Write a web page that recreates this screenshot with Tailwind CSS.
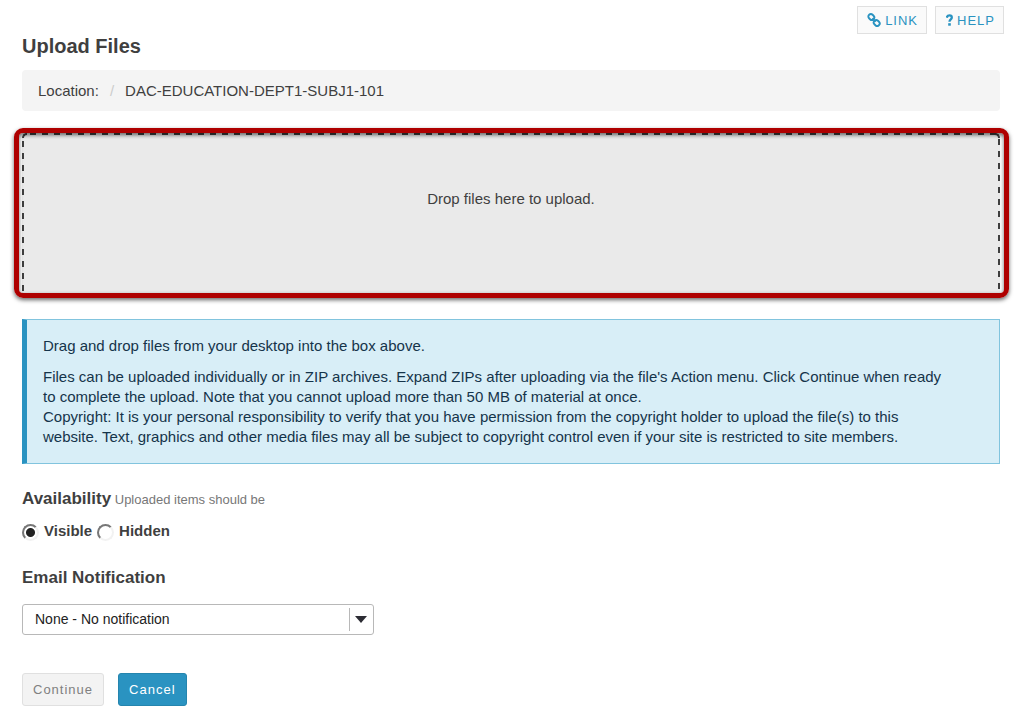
<!DOCTYPE html>
<html lang="en">
<head>
<meta charset="utf-8">
<title>Upload Files</title>
<script src="https://cdn.jsdelivr.net/npm/@tailwindcss/browser@4"></script>
</head>
<body class="bg-white font-['Liberation_Sans',Arial,sans-serif] text-[15px] leading-5 text-[#3f3f3f]">
<nav class="flex justify-end gap-2 pt-1.5 pr-[13px]">
  <a href="#link" class="flex h-7 items-center gap-1 border border-[#e0e0e0] bg-[#fafafa] pr-2 pl-[9px] text-[13px] tracking-[1px] text-[#2a93c1]">
    <svg class="size-[14px]" viewBox="0 0 14 14" fill="none" stroke="currentColor" stroke-width="1.9" aria-hidden="true"><rect x="1.2" y="1.5" width="6.2" height="5" rx="2.4" transform="rotate(45 4.3 4)"/><rect x="6.6" y="7.5" width="6.2" height="5" rx="2.4" transform="rotate(45 9.700 10)"/><path d="M5.300 5.300l3.400 3.400"/></svg>
    <span class="pt-0.5">LINK</span>
  </a>
  <a href="#help" class="flex h-7 items-center gap-1 border border-[#e0e0e0] bg-[#fafafa] pr-2 pl-[10px] text-[13px] tracking-[1px] text-[#2a93c1]">
    <svg class="h-3 w-[7px]" viewBox="0 0 7 12" aria-hidden="true"><path d="M0.8 3.7 C1.1 2 2.200 1.300 3.500 1.300 C5 1.300 5.800 2.200 5.800 3.400 C5.800 5.400 3.500 5.200 3.500 7.800" fill="none" stroke="currentColor" stroke-width="2.300"/><rect x="2.200" y="9.200" width="2.600" height="2.500" fill="currentColor"/></svg>
    <span class="pt-0.5">HELP</span>
  </a>
</nav>
<main class="pr-[17px] pb-3 pl-[22px]">
  <h1 class="text-xl leading-6 font-bold">Upload Files</h1>
  <div class="mt-3 flex h-[41px] items-center rounded bg-[#f4f4f4] px-4">
    <span>Location:</span><span class="px-[11px] text-[#cccccc]">/</span><span>DAC-EDUCATION-DEPT1-SUBJ1-101</span>
  </div>
  <section class="relative mt-[22px] h-[161px] rounded-t bg-[#eaeaea] pt-14 text-center">
    <div class="absolute inset-0" aria-hidden="true">
      <div class="absolute top-0 left-0 size-[5px] rounded-tl-[5px] border-t-2 border-l-2 border-[#3f3f3f]"></div>
      <div class="absolute top-0 right-0 size-[5px] rounded-tr-[5px] border-t-2 border-r-2 border-[#3f3f3f]"></div>
      <div class="absolute top-0 right-1 left-2 h-0.5 bg-[repeating-linear-gradient(to_right,#3f3f3f_0_6px,transparent_6px_12px)]"></div>
      <div class="absolute top-2 bottom-0 left-0 w-0.5 bg-[repeating-linear-gradient(to_bottom,#3f3f3f_0_6px,transparent_6px_12px)]"></div>
      <div class="absolute top-1.5 right-0 bottom-0 w-0.5 bg-[repeating-linear-gradient(to_bottom,#3f3f3f_0_6px,transparent_6px_12px)]"></div>
    </div>
    <p>Drop files here to upload.</p>
    <div class="pointer-events-none absolute -top-[5px] -right-[9px] -bottom-1 -left-2 rounded-[9px] border-5 border-[#ae0000] shadow-[0_2px_4px_rgba(0,0,0,0.6),inset_0_2px_4px_rgba(0,0,0,0.6)]" aria-hidden="true"></div>
  </section>
  <div class="mt-[25px] border border-l-5 border-[#81c4de] border-l-[#2a93c1] bg-[#d8eef7] py-4 pr-[50px] pl-4 text-[#15344a]">
    <p>Drag and drop files from your desktop into the box above.</p>
    <p class="mt-[11px]">Files can be uploaded individually or in ZIP archives. Expand ZIPs after uploading via the file's Action menu. Click Continue when ready to complete the upload. Note that you cannot upload more than 50 MB of material at once.<br>Copyright: It is your personal responsibility to verify that you have permission from the copyright holder to upload the file(s) to this website. Text, graphics and other media files may all be subject to copyright control even if your site is restricted to site members.</p>
  </div>
  <form>
    <fieldset>
      <legend class="pt-[25px] text-[13px] text-[#777]"><span class="text-[17px] font-bold text-[#3f3f3f]">Availability</span> Uploaded items should be</legend>
      <div class="mt-[11px] flex items-center gap-[5px] font-bold">
        <input id="visible" type="radio" name="availability" checked class="mt-0.5 size-[17px] appearance-none rounded-full border-2 border-[#f2f2f2] border-t-[#777] border-l-[#777] bg-white bg-no-repeat checked:bg-[radial-gradient(circle,#222_0_4px,transparent_5px)]"><label for="visible">Visible</label>
        <input id="hidden" type="radio" name="availability" class="mt-0.5 size-[17px] appearance-none rounded-full border-2 border-[#f2f2f2] border-t-[#777] border-l-[#777] bg-white bg-no-repeat checked:bg-[radial-gradient(circle,#222_0_4px,transparent_5px)]"><label for="hidden">Hidden</label>
      </div>
    </fieldset>
    <label for="notify" class="mt-[27px] block text-[17px] font-bold">Email Notification</label>
    <div class="relative mt-4 w-[352px] max-w-full">
      <select id="notify" class="block h-[31px] w-full appearance-none rounded-[3px] border border-[#b8b8b8] bg-white pb-0.5 pl-3 text-sm text-[#222]"><option>None - No notification</option></select>
      <span class="pointer-events-none absolute inset-y-1 right-0 flex w-[25px] items-center justify-center border-l border-[#b8b8b8] pr-0.5" aria-hidden="true"><svg class="h-[7px] w-3" viewBox="0 0 12 7" fill="#2c2c34"><path d="M0 0h12L6 7z"/></svg></span>
    </div>
    <div class="mt-[38px] flex gap-[14px] text-[13px] tracking-[1px]">
      <button type="button" disabled class="h-[33px] rounded-[3px] border border-[#e0e0e0] bg-[#f3f3f3] px-[10px] text-[#808080]">Continue</button>
      <button type="button" class="h-[33px] rounded-[3px] border border-[#2585ae] bg-[#2a93c1] px-[10px] text-white">Cancel</button>
    </div>
  </form>
</main>
</body>
</html>
